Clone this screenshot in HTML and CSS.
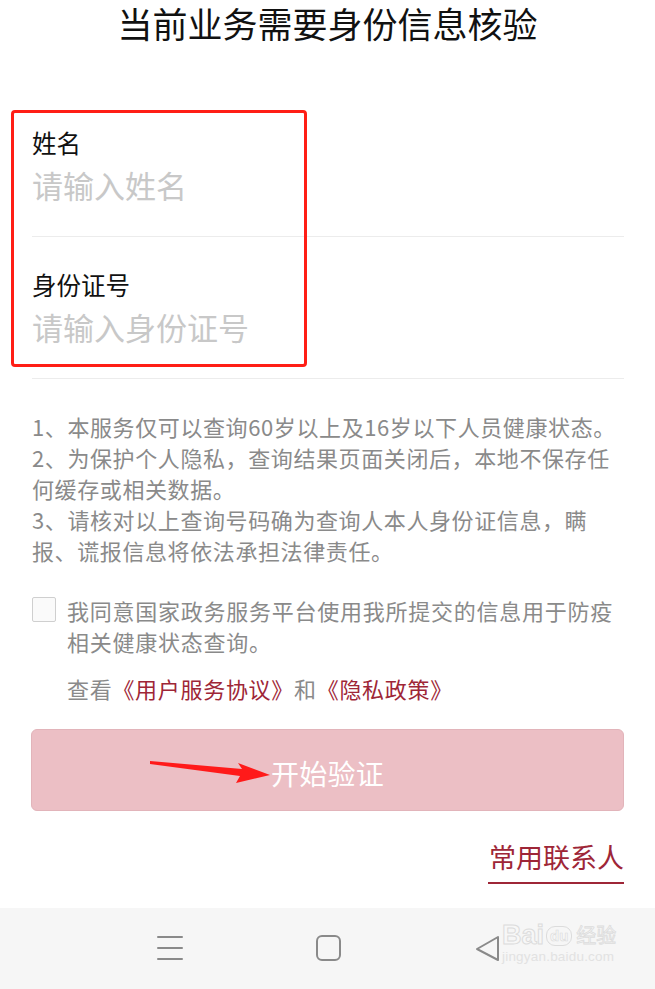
FILE: index.html
```html
<!DOCTYPE html>
<html lang="zh-CN">
<head>
<meta charset="utf-8">
<title>身份信息核验</title>
<link rel="stylesheet" href="styles.css">
</head>
<body>
<div class="page">
  <h1 class="title">当前业务需要身份信息核验</h1>

  <div class="form">
    <div class="field">
      <div class="label">姓名</div>
      <div class="placeholder">请输入姓名</div>
    </div>
    <div class="field">
      <div class="label">身份证号</div>
      <div class="placeholder">请输入身份证号</div>
    </div>
    <div class="mark-box"></div>
  </div>

  <div class="notes">
    <p>1、本服务仅可以查询60岁以上及16岁以下人员健康状态。</p>
    <p>2、为保护个人隐私，查询结果页面关闭后，本地不保存任何缓存或相关数据。</p>
    <p>3、请核对以上查询号码确为查询人本人身份证信息，瞒报、谎报信息将依法承担法律责任。</p>
  </div>

  <div class="agree">
    <span class="checkbox"></span>
    <p class="agree-text">我同意国家政务服务平台使用我所提交的信息用于防疫相关健康状态查询。</p>
  </div>

  <p class="links">查看<span class="link">《用户服务协议》</span>和<span class="link">《隐私政策》</span></p>

  <div class="btn-wrap">
    <button class="btn">开始验证</button>
    <svg class="arrow" width="140" height="40" viewBox="0 0 140 40">
      <polygon points="0,2 92,10 88,4 120,16 86,24 90,17 0,5" fill="#ff1a1a"/>
    </svg>
  </div>

  <div class="contact-row">
    <span class="contact">常用联系人</span>
  </div>

  <nav class="navbar">
    <svg class="nav-icon" width="28" height="28" viewBox="0 0 28 28">
      <g stroke="#8a8a8a" stroke-width="2" stroke-linecap="round">
        <line x1="2" y1="3" x2="26" y2="3"/>
        <line x1="2" y1="14" x2="26" y2="14"/>
        <line x1="2" y1="25" x2="26" y2="25"/>
      </g>
    </svg>
    <svg class="nav-icon" width="28" height="28" viewBox="0 0 28 28">
      <rect x="2" y="2" width="23" height="24" rx="5" fill="none" stroke="#8a8a8a" stroke-width="2"/>
    </svg>
    <svg class="nav-icon" width="28" height="28" viewBox="0 0 28 28">
      <path d="M24 3 L3 15 L24 26 Z" fill="none" stroke="#8a8a8a" stroke-width="2" stroke-linejoin="round"/>
    </svg>
    <div class="watermark">
      <div class="wm-top"><span class="wm-bai">Bai</span><span class="wm-du">du</span><span class="wm-jy">经验</span></div>
      <div class="wm-url">jingyan.baidu.com</div>
    </div>
  </nav>
</div>
</body>
</html>
```

FILE: styles.css
```css
* {
  box-sizing: border-box;
}

html, body {
  margin: 0;
  padding: 0;
  background: #ffffff;
}

body {
  font-family: "Noto Sans CJK SC", "Noto Sans", sans-serif;
  color: #111;
}

.page {
  width: 655px;
  display: flex;
  flex-direction: column;
}

.title {
  margin: 0;
  font-size: 35px;
  font-weight: 400;
  line-height: 45px;
  text-align: center;
  color: #111;
}

.form {
  position: relative;
  margin: 50px 31px 0 32px;
}

.field {
  padding: 32px 0 31px;
  border-bottom: 1px solid #ececec;
}

.label {
  font-size: 24.5px;
  line-height: 32px;
  color: #111;
}

.placeholder {
  margin-top: 6px;
  font-size: 31px;
  line-height: 40px;
  color: #c8c8c8;
}

.mark-box {
  position: absolute;
  left: -21px;
  top: 15px;
  width: 296px;
  height: 257px;
  border: 3px solid #ff1e16;
  border-radius: 4px;
}

.notes {
  margin: 32px 31px 0 32px;
  font-size: 22px;
  line-height: 31px;
  letter-spacing: 0.6px;
  color: #8a8a8a;
}

.notes p {
  margin: 0;
}

.agree {
  display: flex;
  align-items: flex-start;
  margin: 29px 31px 0 32px;
  gap: 11px;
}

.checkbox {
  flex: none;
  width: 24px;
  height: 25px;
  margin-top: 2px;
  border: 1.5px solid #cfcfcf;
  border-radius: 2px;
  background: #fafafa;
}

.agree-text {
  margin: 0;
  font-size: 22px;
  line-height: 31px;
  letter-spacing: 0.75px;
  color: #8a8a8a;
}

.links {
  margin: 16px 31px 0 67px;
  font-size: 22px;
  line-height: 31px;
  letter-spacing: 0.7px;
  color: #8a8a8a;
}

.link {
  color: #9e2637;
}

.btn-wrap {
  position: relative;
  margin: 25px 31px 0 31px;
}

.btn {
  display: block;
  width: 100%;
  height: 82px;
  padding: 6px 0 0;
  border: 1px solid #e2b4ba;
  border-radius: 6px;
  background: #ecbfc5;
  color: #ffffff;
  font-family: "Noto Sans CJK SC", "Noto Sans", sans-serif;
  font-size: 28px;
  letter-spacing: 0.3px;
}

.arrow {
  position: absolute;
  left: 119px;
  top: 30px;
}

.contact-row {
  display: flex;
  justify-content: flex-end;
  margin: 28px 31px 0 32px;
}

.contact {
  font-size: 27px;
  line-height: 36px;
  padding: 0 0 7px 1px;
  border-bottom: 2px solid #9e2637;
  color: #9e2637;
}

.navbar {
  position: relative;
  margin-top: 24px;
  height: 82px;
  background: #f6f6f6;
  display: flex;
  align-items: center;
  padding: 0 0 0 156px;
  gap: 131px;
}

.nav-icon {
  display: block;
  margin-top: -3px;
}

.watermark {
  position: absolute;
  left: 502px;
  top: 13px;
  font-family: "Liberation Sans", "Noto Sans CJK SC", sans-serif;
}

.wm-top {
  display: flex;
  align-items: flex-end;
  line-height: 28px;
}

.wm-bai {
  font-size: 27px;
  font-weight: 700;
  color: #f7f7f7;
  -webkit-text-stroke: 1px #dcdcdc;
}

.wm-du {
  margin-left: 2px;
  margin-bottom: 3px;
  padding: 0 3px;
  font-size: 15px;
  line-height: 18px;
  font-weight: 700;
  color: #f7f7f7;
  -webkit-text-stroke: 0.6px #dcdcdc;
  border: 1px solid #dcdcdc;
  border-radius: 9px;
}

.wm-jy {
  margin-left: 4px;
  font-size: 20px;
  font-family: "Noto Sans CJK SC", sans-serif;
  color: #f7f7f7;
  -webkit-text-stroke: 0.8px #dcdcdc;
}

.wm-url {
  font-size: 13.5px;
  line-height: 16px;
  color: #e2e2e2;
  letter-spacing: 0.2px;
}
```
